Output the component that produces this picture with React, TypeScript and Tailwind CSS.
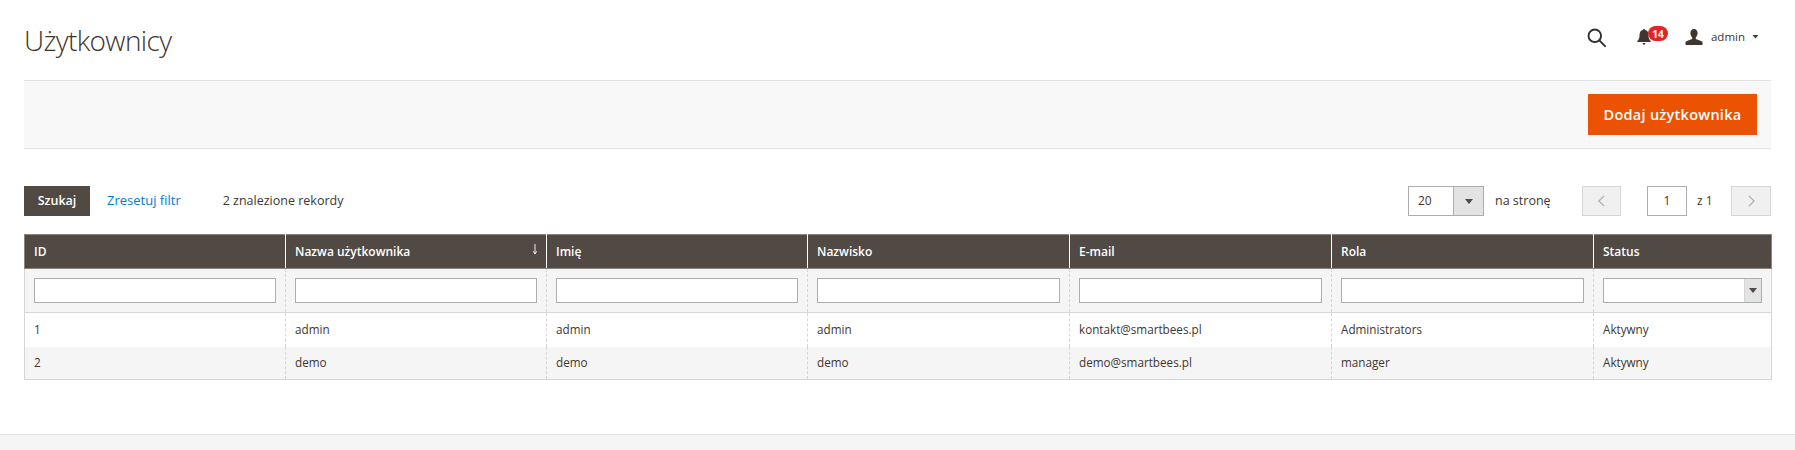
const cols = ["ID", "Nazwa użytkownika", "Imię", "Nazwisko", "E-mail", "Rola", "Status"];
const rows = [
  ["1", "admin", "admin", "admin", "kontakt@smartbees.pl", "Administrators", "Aktywny"],
  ["2", "demo", "demo", "demo", "demo@smartbees.pl", "manager", "Aktywny"],
];

function Caret({ className }: { className: string }) {
  return (
    <svg viewBox="0 0 10 6" className={className} fill="currentColor">
      <path d="M0 0h10L5 6z" />
    </svg>
  );
}

export default function App() {
  return (
    <div className="flex h-[450px] w-[1795px] flex-col overflow-hidden bg-white font-['Open_Sans',sans-serif] text-[14px] text-[#41362f]">
      <header className="flex h-[80px] items-center justify-between px-[24px]">
        <h1 className="text-[28px] font-light leading-[36px] tracking-[-0.65px] text-[#41362f]">Użytkownicy</h1>
        <div className="mb-[6px] mr-[12px] flex items-center">
          <svg viewBox="0 0 20 20" className="h-[19px] w-[19px] text-[#303030]" fill="none" stroke="currentColor" strokeWidth="2">
            <circle cx="8.2" cy="8.2" r="6.6" />
            <path d="M13 13l6 6" strokeLinecap="round" />
          </svg>
          <div className="relative ml-[31px] h-[16px] w-[14px]">
            <svg viewBox="0 0 14 16" className="h-[16px] w-[14px] text-[#41362f]" fill="currentColor">
              <path d="M7 0c.7 0 1.100.4 1.200 1 2.200.5 3.200 2.200 3.200 4.500 0 3.500.8 5 2.300 6.600V13H.3v-.9C1.800 10.500 2.600 9 2.600 5.500 2.600 3.200 3.700 1.500 5.800 1 5.900.4 6.300 0 7 0zM5.600 14h2.800c0 1-.6 1.700-1.400 1.700S5.600 15 5.600 14z" />
            </svg>
            <span className="absolute left-[11px] top-[-3px] flex h-[15px] w-[20px] items-center justify-center rounded-full bg-[#e22626] text-[10px] font-bold leading-none text-white">14</span>
          </div>
          <svg viewBox="0 0 18 16" className="ml-[34px] h-[16px] w-[18px] text-[#41362f]" fill="currentColor">
            <path d="M9 0c2.300 0 3.600 1.700 3.600 4 0 1.700-.7 3.300-1.800 4.300v1.500c0 .8 4.200 1.300 6.700 3.200V16H.5v-3c2.500-1.900 6.700-2.400 6.700-3.200V8.300C6.100 7.300 5.400 5.700 5.400 4 5.400 1.700 6.700 0 9 0z" />
          </svg>
          <span className="ml-[8px] text-[11.500px] text-[#41362f]">admin</span>
          <Caret className="ml-[7px] h-[3.500px] w-[7px] text-[#41362f]" />
        </div>
      </header>

      <div className="mx-[24px] flex h-[69px] items-center justify-end border-y border-[#e3e3e3] bg-[#f8f8f8] pr-[14px]">
        <button className="h-[41px] w-[169px] bg-[#eb5202] text-[14.500px] font-semibold tracking-[0.27px] text-white">Dodaj użytkownika</button>
      </div>

      <div className="mx-[24px] mt-[37px] flex h-[30px] items-center">
        <button className="h-[30px] w-[66px] bg-[#514943] text-[12.500px] font-semibold text-white">Szukaj</button>
        <a className="ml-[17px] text-[13px] text-[#007bdb]">Zresetuj filtr</a>
        <span className="ml-[42px] text-[12.500px]">2 znalezione rekordy</span>
        <div className="ml-auto flex items-center">
          <div className="flex h-[30px] w-[76px] border border-[#adadad] bg-white">
            <span className="flex flex-1 items-center pl-[9px] text-[12px]">20</span>
            <span className="flex w-[30px] items-center justify-center border-l border-[#adadad] bg-[#e3e3e3]">
              <Caret className="h-[5px] w-[8px] text-[#514943]" />
            </span>
          </div>
          <span className="ml-[11px] w-[87px] text-[12.500px]">na stronę</span>
          <button className="flex h-[30px] w-[39px] items-center justify-center border border-[#d6d6d6] bg-[#f0f0f0]">
            <svg viewBox="0 0 8 14" className="h-[12px] w-[7px]" fill="none" stroke="#adadad" strokeWidth="1.500"><path d="M7 1L1 7l6 6" /></svg>
          </button>
          <div className="ml-[26px] flex h-[30px] w-[40px] items-center justify-center border border-[#adadad] text-[12px]">1</div>
          <span className="ml-[10px] w-[34px] text-[12px]">z 1</span>
          <button className="flex h-[30px] w-[40px] items-center justify-center border border-[#d6d6d6] bg-[#f0f0f0]">
            <svg viewBox="0 0 8 14" className="h-[12px] w-[7px]" fill="none" stroke="#adadad" strokeWidth="1.500"><path d="M1 1l6 6-6 6" /></svg>
          </button>
        </div>
      </div>

      <table className="mx-[24px] mt-[18px] w-[1747px] table-fixed border-collapse text-[11.700px]">
        <colgroup>
          <col className="w-[261px]" />
          <col className="w-[261px]" />
          <col className="w-[261px]" />
          <col className="w-[262px]" />
          <col className="w-[262px]" />
          <col className="w-[262px]" />
          <col className="w-[178px]" />
        </colgroup>
        <thead>
          <tr className="h-[34px] bg-[#514943] text-[12px] text-white">
            {cols.map((c, i) => (
              <th key={c} className={`relative border border-y-[#8a837f] border-x-white px-[9px] text-left font-semibold ${i === 0 ? "border-l-[#8a837f]" : ""} ${i === 6 ? "border-r-[#8a837f]" : ""}`}>
                {c}
                {i === 1 && (
                  <svg viewBox="0 0 6 12" className="absolute right-[8px] top-[9px] h-[11px] w-[6px]" fill="none" stroke="#fff" strokeWidth="1"><path d="M3 0v10M1.200 8L3 11l1.800-3" /></svg>
                )}
              </th>
            ))}
          </tr>
        </thead>
        <tbody>
          <tr className="h-[44px] bg-[#f5f5f5]">
            {cols.map((c, i) => (
              <td key={c} className={`border border-[#d6d6d6] px-[9px] [border-left-style:dashed] [border-right-style:dashed] ${i === 0 ? "[border-left-style:solid]" : ""} ${i === 6 ? "[border-right-style:solid]" : ""}`}>
                {i < 6 ? (
                  <div className="h-[25px] border border-[#adadad] bg-white" />
                ) : (
                  <div className="flex h-[25px] justify-end border border-[#adadad] bg-white">
                    <span className="flex w-[17px] items-center justify-center border-l border-[#d6d6d6] bg-[#e3e3e3]">
                      <Caret className="h-[5px] w-[8px] text-[#514943]" />
                    </span>
                  </div>
                )}
              </td>
            ))}
          </tr>
          {rows.map((r, ri) => (
            <tr key={r[0]} className={ri === 0 ? "h-[34px] bg-white" : "h-[33px] bg-[#f5f5f5]"}>
              {r.map((v, i) => (
                <td key={i} className={`border-x border-[#d6d6d6] px-[9px] text-[#41362f] [border-left-style:dashed] [border-right-style:dashed] ${i === 0 ? "[border-left-style:solid]" : ""} ${i === 6 ? "[border-right-style:solid]" : ""} ${ri === 1 ? "border-b" : ""}`}>
                  {v}
                </td>
              ))}
            </tr>
          ))}
        </tbody>
      </table>

      <footer className="mt-auto h-[16px] border-t border-[#e3e3e3] bg-[#f5f5f5]" />
    </div>
  );
}
